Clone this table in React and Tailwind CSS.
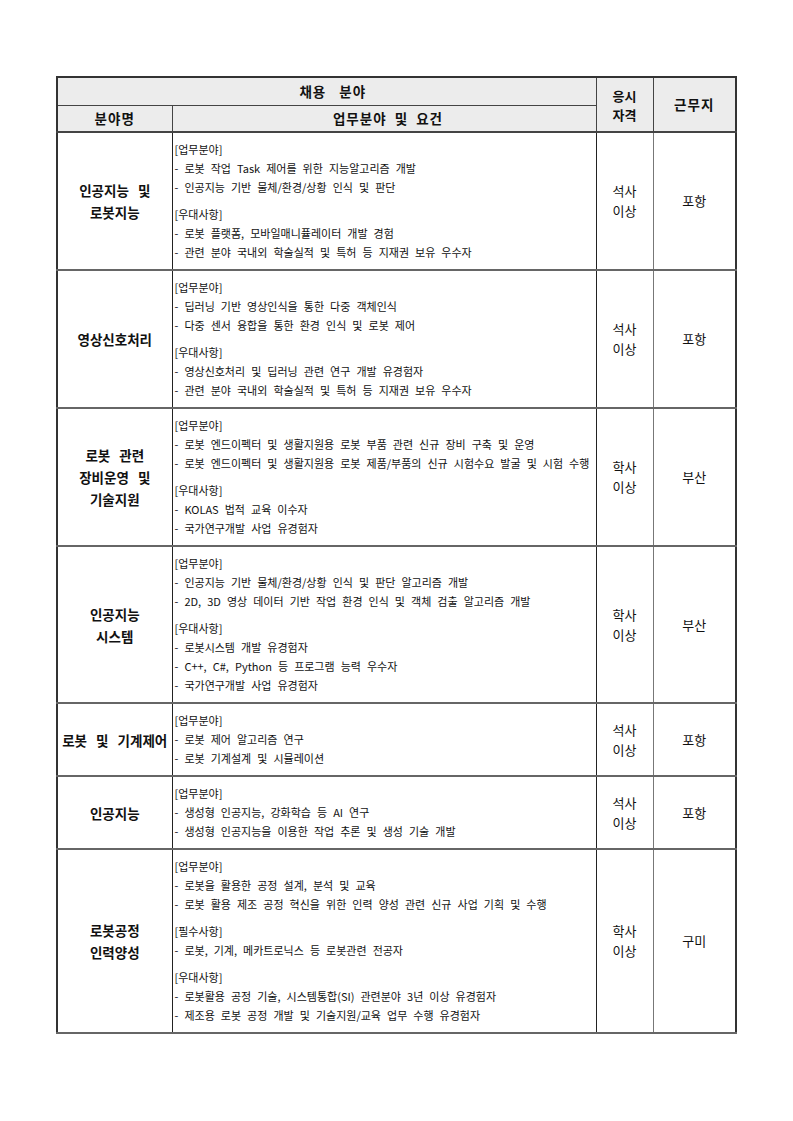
// Recruitment table (채용 분야)

const rows = [
  {
    name: ['인공지능 및', '로봇지능'],
    sections: [
      ['[업무분야]', ['로봇 작업 Task 제어를 위한 지능알고리즘 개발', '인공지능 기반 물체/환경/상황 인식 및 판단']],
      ['[우대사항]', ['로봇 플랫폼, 모바일매니퓰레이터 개발 경험', '관련 분야 국내외 학술실적 및 특허 등 지재권 보유 우수자']],
    ],
    degree: '석사',
    place: '포항',
  },
  {
    name: ['영상신호처리'],
    sections: [
      ['[업무분야]', ['딥러닝 기반 영상인식을 통한 다중 객체인식', '다중 센서 융합을 통한 환경 인식 및 로봇 제어']],
      ['[우대사항]', ['영상신호처리 및 딥러닝 관련 연구 개발 유경험자', '관련 분야 국내외 학술실적 및 특허 등 지재권 보유 우수자']],
    ],
    degree: '석사',
    place: '포항',
  },
  {
    name: ['로봇 관련', '장비운영 및', '기술지원'],
    sections: [
      ['[업무분야]', ['로봇 엔드이펙터 및 생활지원용 로봇 부품 관련 신규 장비 구축 및 운영', '로봇 엔드이펙터 및 생활지원용 로봇 제품/부품의 신규 시험수요 발굴 및 시험 수행']],
      ['[우대사항]', ['KOLAS 법적 교육 이수자', '국가연구개발 사업 유경험자']],
    ],
    degree: '학사',
    place: '부산',
  },
  {
    name: ['인공지능', '시스템'],
    sections: [
      ['[업무분야]', ['인공지능 기반 물체/환경/상황 인식 및 판단 알고리즘 개발', '2D, 3D 영상 데이터 기반 작업 환경 인식 및 객체 검출 알고리즘 개발']],
      ['[우대사항]', ['로봇시스템 개발 유경험자', 'C++, C#, Python 등 프로그램 능력 우수자', '국가연구개발 사업 유경험자']],
    ],
    degree: '학사',
    place: '부산',
  },
  {
    name: ['로봇 및 기계제어'],
    sections: [
      ['[업무분야]', ['로봇 제어 알고리즘 연구', '로봇 기계설계 및 시뮬레이션']],
    ],
    degree: '석사',
    place: '포항',
  },
  {
    name: ['인공지능'],
    sections: [
      ['[업무분야]', ['생성형 인공지능, 강화학습 등 AI 연구', '생성형 인공지능을 이용한 작업 추론 및 생성 기술 개발']],
    ],
    degree: '석사',
    place: '포항',
  },
  {
    name: ['로봇공정', '인력양성'],
    sections: [
      ['[업무분야]', ['로봇을 활용한 공정 설계, 분석 및 교육', '로봇 활용 제조 공정 혁신을 위한 인력 양성 관련 신규 사업 기획 및 수행']],
      ['[필수사항]', ['로봇, 기계, 메카트로닉스 등 로봇관련 전공자']],
      ['[우대사항]', ['로봇활용 공정 기술, 시스템통합(SI) 관련분야 3년 이상 유경험자', '제조용 로봇 공정 개발 및 기술지원/교육 업무 수행 유경험자']],
    ],
    degree: '학사',
    place: '구미',
  },
]

const font = { fontFamily: '"Noto Sans CJK KR", "Noto Sans", sans-serif' }

export default function App() {
  return (
    <div className="bg-white min-h-[1121px] pt-[76px] text-[#111]" style={font}>
      <table className="mx-auto w-[679px] border-collapse border-2 border-[#333] table-fixed">
        <colgroup>
          <col className="w-[115px]" />
          <col className="w-[424px]" />
          <col className="w-[57px]" />
          <col className="w-[83px]" />
        </colgroup>
        <thead className="bg-[#ececec]">
          <tr className="h-[28px]">
            <th colSpan={2} className="border-b border-r border-[#444] pl-[12px] text-[13.5px] font-bold tracking-[1px] [word-spacing:9px]">채용 분야</th>
            <th rowSpan={2} className="border-r border-b-2 border-[#444] text-[13px] font-bold leading-[19px]">응시<br />자격</th>
            <th rowSpan={2} className="border-b-2 border-[#444] text-[13.5px] font-bold tracking-[1px]">근무지</th>
          </tr>
          <tr className="h-[27px]">
            <th className="border-r border-b-2 border-[#444] text-[13.5px] font-bold tracking-[1px]">분야명</th>
            <th className="border-r border-b-2 border-[#444] pl-[8px] text-[13.5px] font-bold tracking-[1px] [word-spacing:4px]">업무분야 및 요건</th>
          </tr>
        </thead>
        <tbody>
          {rows.map((r, i) => (
            <tr key={i} className="border-b-2 border-[#666]">
              <td className="border-r border-[#222] text-center text-[13.5px] font-bold leading-[22px]">
                {r.name.map(n => <div key={n} className="whitespace-nowrap [word-spacing:6px]">{n}</div>)}
              </td>
              <td className="border-r border-[#222] pl-[2px] pt-[7px] pb-[7px] align-top text-[11px] leading-[19px]">
                {r.sections.map(([title, items], j) => (
                  <div key={title} className={j > 0 ? 'mt-[8px]' : ''}>
                    <div>{title}</div>
                    {items.map(t => (
                      <div key={t} className="whitespace-nowrap [word-spacing:3.6px]">- {t}</div>
                    ))}
                  </div>
                ))}
              </td>
              <td className="border-r border-[#777] text-center text-[13px] leading-[20px]">
                <div>{r.degree}</div>
                <div>이상</div>
              </td>
              <td className="text-center text-[13px]">{r.place}</td>
            </tr>
          ))}
        </tbody>
      </table>
    </div>
  )
}
